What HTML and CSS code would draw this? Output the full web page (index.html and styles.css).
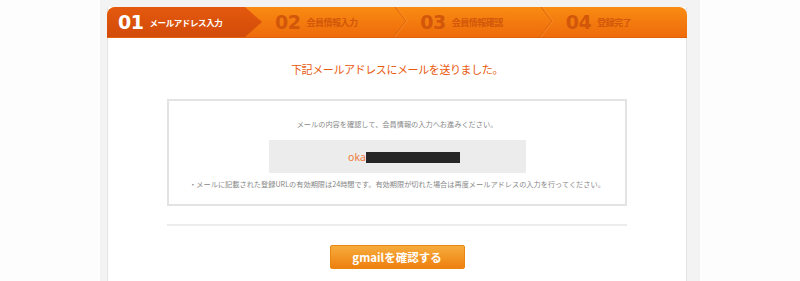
FILE: index.html
```html
<!DOCTYPE html>
<html lang="ja">
<head>
    <meta charset="UTF-8">
    <meta name="viewport" content="width=device-width, initial-scale=1.0">
    <title>メールアドレス入力</title>
    <link rel="stylesheet" href="styles.css">
</head>
<body>
    <div class="wrap">
        <div class="card">
            <!-- Steps -->
            <ol class="steps">
                <li class="step current"><span class="num">01</span><span class="label">メールアドレス入力</span></li>
                <li class="step second"><span class="num">02</span><span class="label">会員情報入力</span></li>
                <li class="step"><span class="num">03</span><span class="label">会員情報確認</span></li>
                <li class="step last"><span class="num">04</span><span class="label">登録完了</span></li>
            </ol>

            <h2 class="title">下記メールアドレスにメールを送りました。</h2>

            <div class="mail-box">
                <p class="lead">メールの内容を確認して、会員情報の入力へお進みください。</p>
                <div class="address"><span class="addr-text">oka</span><span class="masked"></span></div>
                <p class="note">・メールに記載された登録URLの有効期限は24時間です。有効期限が切れた場合は再度メールアドレスの入力を行ってください。</p>
            </div>

            <hr class="divider">

            <div class="actions">
                <button class="btn-gmail">gmailを確認する</button>
            </div>
        </div>
    </div>
</body>
</html>
```

FILE: styles.css
```css
body {
    margin: 0;
    padding: 0;
    background-color: #fdfdfd;
    font-family: "Noto Sans CJK JP", "Noto Sans", sans-serif;
}
.wrap {
    width: 580px;
    height: 274px;
    margin-left: 100px;
    padding: 7px 13px 0 7px;
    background-color: #f3f3f3;
}
.card {
    height: 274px;
    background-color: #fff;
    border-left: 1px solid #e4e4e4;
    border-right: 1px solid #e4e4e4;
    box-sizing: border-box;
    text-align: center;
}
.steps {
    display: flex;
    margin: 0 -1px;
    padding: 0;
    list-style: none;
    height: 31px;
    border-radius: 8px 8px 0 0;
    background: linear-gradient(#f98b12, #ee6b0b);
    border-bottom: 1px solid #e0600c;
    box-sizing: border-box;
    overflow: hidden;
}
.step {
    position: relative;
    display: flex;
    align-items: center;
    flex: 1;
    padding-left: 24px;
    color: #d2570a;
}
.step::after {
    content: "";
    position: absolute;
    right: -8px;
    top: 3px;
    width: 21px;
    height: 21px;
    border-top: 1px solid #e3690d;
    border-right: 1px solid #e3690d;
    box-shadow: 1px -1px 0 rgba(255, 170, 80, 0.35);
    transform: rotate(45deg) skew(8deg, 8deg);
}
.step.last::after {
    display: none;
}
.step.current {
    flex: none;
    width: 127px;
    padding-left: 11px;
    color: #fff;
    border-radius: 8px 0 0 0;
    background: linear-gradient(#e4590e, #d24b09);
}
.step.current::after {
    right: -17px;
    top: 0;
    width: 17px;
    height: 30px;
    border: none;
    box-shadow: none;
    transform: none;
    background: linear-gradient(#e4590e, #d24b09);
    clip-path: polygon(0 0, 100% 50%, 0 100%);
    z-index: 1;
}
.step.second {
    padding-left: 30px;
}
.num {
    font-family: "DejaVu Sans", sans-serif;
    font-weight: bold;
    font-size: 19px;
    letter-spacing: -0.5px;
    line-height: 1;
}
.label {
    margin-left: 6px;
    font-size: 9px;
    font-weight: bold;
    letter-spacing: -0.5px;
}
.step.current .label {
    font-size: 8.5px;
    letter-spacing: -0.4px;
}
.title {
    margin: 23px 0 0;
    font-size: 11px;
    font-weight: normal;
    letter-spacing: -0.4px;
    line-height: 16px;
    color: #e8590c;
}
.mail-box {
    width: 456px;
    margin: 22px auto 0;
    padding: 17px 0 14px;
    border: 2px solid #e3e3e3;
}
.lead {
    margin: 0;
    font-size: 7.2px;
    line-height: 12px;
    color: #888;
}
.address {
    display: flex;
    align-items: center;
    justify-content: center;
    width: 257px;
    height: 33px;
    margin: 10px auto 0;
    padding-left: 14px;
    box-sizing: border-box;
    background-color: #ececec;
}
.addr-text {
    font-family: "Noto Sans", sans-serif;
    font-size: 10.5px;
    color: #ef7a3d;
}
.masked {
    width: 94px;
    height: 11px;
    margin-top: 1px;
    background-color: #262626;
}
.note {
    margin: 5px 0 0;
    font-size: 7.2px;
    line-height: 12px;
    color: #888;
}
.divider {
    width: 460px;
    margin: 18px auto 0;
    border: none;
    border-top: 2px solid #ececec;
}
.actions {
    padding-top: 17px;
}
.btn-gmail {
    width: 135px;
    height: 24px;
    border: 1px solid #e8860f;
    border-radius: 2px;
    background: linear-gradient(#f6ac3c, #ee800f);
    color: #fff;
    font-family: "Noto Sans CJK JP", sans-serif;
    font-weight: bold;
    font-size: 11.5px;
    cursor: pointer;
}
```
